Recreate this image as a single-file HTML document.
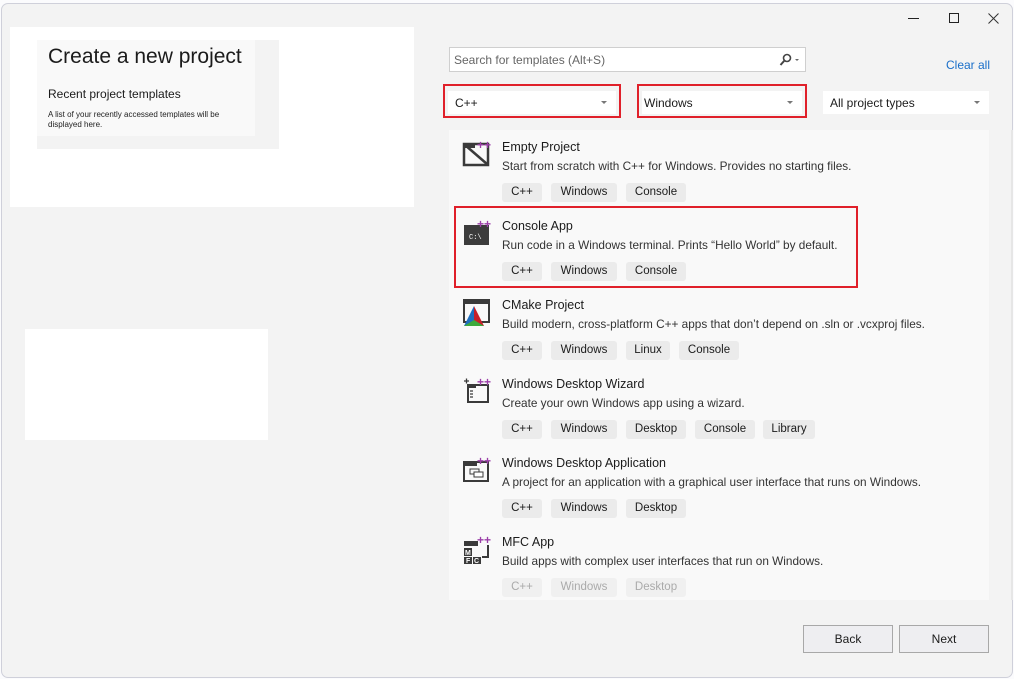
<!DOCTYPE html>
<html><head><meta charset="utf-8"><style>
*{margin:0;padding:0;box-sizing:border-box}
body{width:1014px;height:679px;background:#fbfbfd;position:relative;overflow:hidden;font-family:"Liberation Sans",sans-serif;color:#1b1b1b}
.a{position:absolute}
#win{left:1px;top:3px;width:1012px;height:675px;background:#f3f3f3;border:1px solid #cfd0da;border-radius:7px}
.tag{position:absolute;height:19px;background:#ebebeb;border-radius:3px;font-size:11.5px;line-height:19px;text-align:center;color:#1b1b1b}
.t{position:absolute;left:502px;font-size:12.5px;color:#1b1b1b}
.d{position:absolute;left:502px;font-size:11.8px;color:#333;white-space:nowrap}
.dd{position:absolute;background:#fff;height:23px;font-size:12px;line-height:23px;padding-left:7px}
.dd:after{content:"";position:absolute;right:9px;top:10px;border-left:3px solid transparent;border-right:3px solid transparent;border-top:3px solid #777}
.red{position:absolute;border:2px solid #e0202a}
.btn{position:absolute;top:625px;width:90px;height:28px;background:#eeeef1;border:1px solid #a8a8a8;font-size:12px;line-height:26px;text-align:center}
.pp{font-size:12px;font-weight:bold;fill:#9b3fa8;font-family:"Liberation Sans"}
</style></head><body>
<div id="win" class="a"></div>
<div class="a" style="left:908px;top:18px;width:11px;height:1px;background:#222"></div>
<div class="a" style="left:949px;top:13px;width:10px;height:10px;border:1px solid #222"></div>
<svg class="a" style="left:988px;top:13px" width="11" height="11"><path d="M0.5 0.5L10.5 10.5M10.5 0.5L0.5 10.5" stroke="#333" stroke-width="1"/></svg>

<div class="a" style="left:10px;top:27px;width:404px;height:180px;background:#fff"></div>
<div class="a" style="left:37px;top:40px;width:242px;height:109px;background:#f3f3f3"></div>
<div class="a" style="left:37px;top:40px;width:218px;height:96px;background:#f9f9f9"></div>
<div class="a" style="left:48px;top:45px;font-size:21px;color:#1b1b1b;white-space:nowrap">Create a new project</div>
<div class="a" style="left:48px;top:87px;font-size:12px;white-space:nowrap">Recent project templates</div>
<div class="a" style="left:48px;top:110px;font-size:8px;line-height:10px;width:180px;color:#222">A list of your recently accessed templates will be displayed here.</div>
<div class="a" style="left:25px;top:329px;width:243px;height:111px;background:#fff"></div>

<div class="a" style="left:449px;top:47px;width:357px;height:25px;background:#fff;border:1px solid #cfcfcf"></div>
<div class="a" style="left:454px;top:53px;font-size:12px;color:#666">Search for templates (Alt+S)</div>
<svg class="a" style="left:778px;top:53px" width="26" height="14"><circle cx="9" cy="5" r="3.5" fill="none" stroke="#444" stroke-width="1.6"/><path d="M6.5 7.5L2.5 12" stroke="#444" stroke-width="2"/><path d="M17 6l4 0-2 2z" fill="#666"/></svg>
<div class="a" style="left:946px;top:58px;font-size:12px;color:#1a6fc9">Clear all</div>

<div class="red" style="left:443px;top:84px;width:178px;height:34px"></div>
<div class="dd" style="left:448px;top:91px;width:168px;line-height:25px">C++</div>
<div class="red" style="left:637px;top:84px;width:170px;height:34px"></div>
<div class="dd" style="left:642px;top:91px;width:160px;padding-left:2px;line-height:25px">Windows</div>
<div class="dd" style="left:823px;top:91px;width:166px;line-height:25px">All project types</div>

<div class="a" style="left:449px;top:130px;width:540px;height:470px;background:#f9f9f9"></div>
<div class="a" style="left:1011px;top:130px;width:2px;height:470px;background:#e6e6e6"></div>

<svg class="a" style="left:462px;top:140px" width="30" height="28"><rect x="2" y="4" width="24" height="21" fill="none" stroke="#3a3a3a" stroke-width="2.5"/><rect x="2" y="4" width="11" height="4" fill="#3a3a3a"/><path d="M3 5L25 24" stroke="#3a3a3a" stroke-width="2.5"/><text x="15" y="9" class="pp">++</text></svg>
<svg class="a" style="left:462px;top:219px" width="30" height="28"><rect x="2" y="6" width="25" height="20" fill="#3c3c3c"/><text x="7" y="20" font-size="7" fill="#fff" font-family="Liberation Mono">C:\</text><text x="15" y="9" class="pp">++</text></svg>
<svg class="a" style="left:462px;top:298px" width="30" height="30"><rect x="2" y="2" width="25" height="22" fill="none" stroke="#3a3a3a" stroke-width="2"/><rect x="2" y="2" width="25" height="4" fill="#3a3a3a"/><path d="M12 8L2 28H12Z" fill="#1f6fc0"/><path d="M12 8L22 28H12Z" fill="#c8202a"/><path d="M2 28L12 22L22 28Z" fill="#3daa3d"/></svg>
<svg class="a" style="left:462px;top:377px" width="30" height="28"><rect x="6" y="8" width="20" height="17" fill="none" stroke="#3a3a3a" stroke-width="2"/><rect x="6" y="8" width="8" height="3" fill="#3a3a3a"/><path d="M2 4h5M4.5 1.5v5M9 10h3M8 14h3M8 17h3M8 20h3" stroke="#3a3a3a" stroke-width="1.3"/><text x="15" y="9" class="pp">++</text></svg>
<svg class="a" style="left:462px;top:456px" width="30" height="28"><rect x="2" y="6" width="24" height="19" fill="none" stroke="#3a3a3a" stroke-width="2"/><rect x="2" y="6" width="13" height="4" fill="#3a3a3a"/><rect x="8" y="13" width="9" height="5" fill="none" stroke="#3a3a3a"/><rect x="12" y="16" width="9" height="5" fill="#fff" stroke="#3a3a3a"/><text x="15" y="9" class="pp">++</text></svg>
<svg class="a" style="left:462px;top:535px" width="30" height="30"><rect x="2" y="6" width="14" height="5" fill="#3a3a3a"/><path d="M26 10v12h-6" stroke="#3a3a3a" stroke-width="2" fill="none"/><rect x="2" y="13" width="8" height="8" fill="#3a3a3a"/><rect x="2" y="22" width="8" height="7" fill="#3a3a3a"/><rect x="11" y="22" width="8" height="7" fill="#3a3a3a"/><text x="3" y="20" font-size="7" fill="#fff" font-family="Liberation Sans" font-weight="bold">M</text><text x="4" y="28" font-size="7" fill="#fff" font-family="Liberation Sans" font-weight="bold">F</text><text x="12" y="28" font-size="7" fill="#fff" font-family="Liberation Sans" font-weight="bold">C</text><text x="15" y="9" class="pp">++</text></svg>

<div class="t" style="top:140px">Empty Project</div>
<div class="d" style="top:159px">Start from scratch with C++ for Windows. Provides no starting files.</div>
<div class="tag" style="left:502px;top:183px;width:40px">C++</div><div class="tag" style="left:551px;top:183px;width:66px">Windows</div><div class="tag" style="left:626px;top:183px;width:60px">Console</div>

<div class="red" style="left:454px;top:206px;width:404px;height:82px"></div>
<div class="t" style="top:219px">Console App</div>
<div class="d" style="top:238px">Run code in a Windows terminal. Prints “Hello World” by default.</div>
<div class="tag" style="left:502px;top:262px;width:40px">C++</div><div class="tag" style="left:551px;top:262px;width:66px">Windows</div><div class="tag" style="left:626px;top:262px;width:60px">Console</div>

<div class="t" style="top:298px">CMake Project</div>
<div class="d" style="top:317px">Build modern, cross-platform C++ apps that don’t depend on .sln or .vcxproj files.</div>
<div class="tag" style="left:502px;top:341px;width:40px">C++</div><div class="tag" style="left:551px;top:341px;width:66px">Windows</div><div class="tag" style="left:626px;top:341px;width:44px">Linux</div><div class="tag" style="left:679px;top:341px;width:60px">Console</div>

<div class="t" style="top:377px">Windows Desktop Wizard</div>
<div class="d" style="top:396px">Create your own Windows app using a wizard.</div>
<div class="tag" style="left:502px;top:420px;width:40px">C++</div><div class="tag" style="left:551px;top:420px;width:66px">Windows</div><div class="tag" style="left:626px;top:420px;width:60px">Desktop</div><div class="tag" style="left:695px;top:420px;width:60px">Console</div><div class="tag" style="left:763px;top:420px;width:52px">Library</div>

<div class="t" style="top:456px">Windows Desktop Application</div>
<div class="d" style="top:475px">A project for an application with a graphical user interface that runs on Windows.</div>
<div class="tag" style="left:502px;top:499px;width:40px">C++</div><div class="tag" style="left:551px;top:499px;width:66px">Windows</div><div class="tag" style="left:626px;top:499px;width:60px">Desktop</div>

<div class="t" style="top:535px">MFC App</div>
<div class="d" style="top:554px">Build apps with complex user interfaces that run on Windows.</div>
<div class="tag" style="left:502px;top:578px;width:40px;color:#aaa;background:#f0f0f0">C++</div><div class="tag" style="left:551px;top:578px;width:66px;color:#aaa;background:#f0f0f0">Windows</div><div class="tag" style="left:626px;top:578px;width:60px;color:#aaa;background:#f0f0f0">Desktop</div>

<div class="btn" style="left:803px">Back</div>
<div class="btn" style="left:899px">Next</div>
</body></html>
